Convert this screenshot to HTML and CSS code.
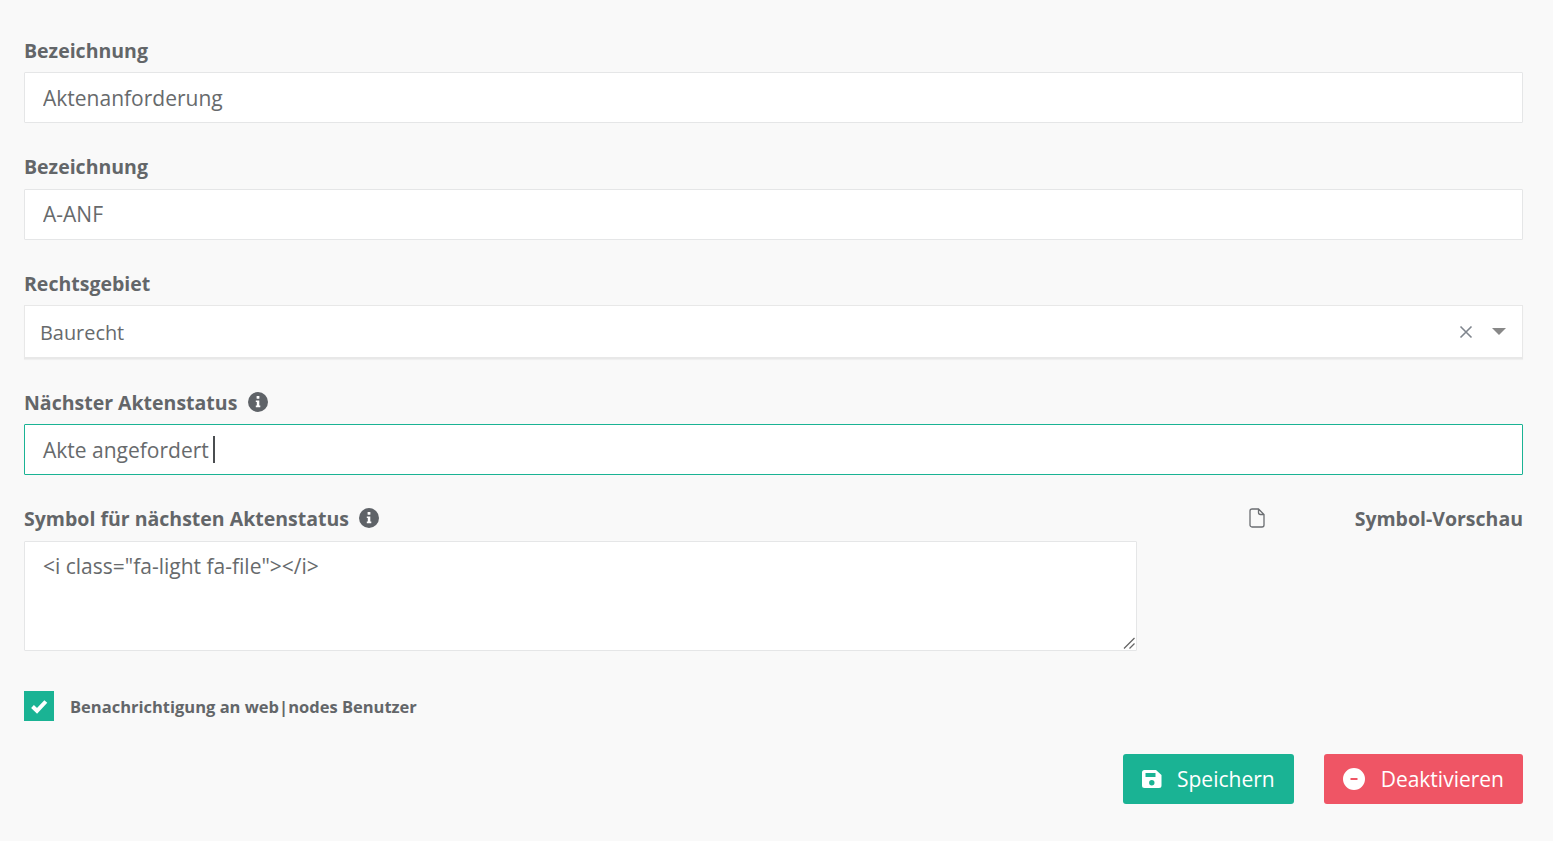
FILE: index.html
```html
<!DOCTYPE html>
<html lang="de">
<head>
<meta charset="utf-8">
<title>Aktenstatus</title>
<link rel="stylesheet" href="styles.css">
</head>
<body>
<form class="form">
  <div class="group">
    <label class="label">Bezeichnung</label>
    <input class="control" type="text" value="Aktenanforderung">
  </div>
  <div class="group group-tight">
    <label class="label label-high">Bezeichnung</label>
    <input class="control control-up" type="text" value="A-ANF">
  </div>
  <div class="group group-select">
    <label class="label">Rechtsgebiet</label>
    <div class="select">
      <span class="select-value">Baurecht</span>
      <svg class="select-clear" width="14" height="14" viewBox="0 0 14 14"><path d="M1.500 1.500l11 11M12.500 1.500l-11 11" stroke="#7f858d" stroke-width="1.600" fill="none"/></svg>
      <span class="select-arrow"></span>
    </div>
  </div>
  <div class="group">
    <label class="label">Nächster Aktenstatus
      <svg class="info info-shift" width="20" height="20" viewBox="0 0 20 20"><circle cx="10" cy="10" r="10" fill="#5f6368"/><rect x="8.600" y="4" width="2.800" height="2.800" rx=".6" fill="#fff"/><path d="M7.800 8.400h3.500v5.200h1v1.700H7.800v-1.700h1v-3.500h-1z" fill="#fff"/></svg>
    </label>
    <div class="control control-focus"><span>Akte angefordert</span><span class="caret"></span></div>
  </div>
  <div class="symbol-row">
    <div class="symbol-main">
      <label class="label label-high">Symbol für nächsten Aktenstatus
        <svg class="info" width="20" height="20" viewBox="0 0 20 20"><circle cx="10" cy="10" r="10" fill="#5f6368"/><rect x="8.600" y="4" width="2.800" height="2.800" rx=".6" fill="#fff"/><path d="M7.800 8.400h3.500v5.200h1v1.700H7.800v-1.700h1v-3.500h-1z" fill="#fff"/></svg>
      </label>
      <div class="area-wrap">
        <textarea class="control area">&lt;i class="fa-light fa-file"&gt;&lt;/i&gt;</textarea>
        <svg class="grip" width="12" height="12" viewBox="0 0 12 12"><path d="M1 11.500L11.500 1M6.500 11.500L11.500 6.500" stroke="#666" stroke-width="1.300" fill="none"/></svg>
      </div>
    </div>
    <div class="symbol-preview">
      <svg class="file-icon" width="16" height="20" viewBox="0 0 16 20"><path d="M3 1h6.500L15 6.500V17a2 2 0 0 1-2 2H3a2 2 0 0 1-2-2V3a2 2 0 0 1 2-2zM9.500 1v3.500a2 2 0 0 0 2 2H15" fill="none" stroke="#6b6e72" stroke-width="1.300"/></svg>
      <span class="label label-high">Symbol-Vorschau</span>
    </div>
  </div>
  <label class="check">
    <span class="check-box"><svg width="18" height="15" viewBox="0 0 18 15"><path d="M2.500 7.500l4.500 4.300L15.800 2.500" fill="none" stroke="#fff" stroke-width="4"/></svg></span>
    <span class="check-text">Benachrichtigung an web|nodes Benutzer</span>
  </label>
  <div class="actions">
    <button type="button" class="btn btn-save">
      <svg width="20" height="20" viewBox="0 0 20 20"><path fill="#fff" fill-rule="evenodd" d="M2.500 1H14l5.500 5v10.500a2.500 2.500 0 0 1-2.500 2.500H2.500A2.500 2.500 0 0 1 0 16.500v-13A2.500 2.500 0 0 1 2.500 1zM3.500 4v4h10V4zM9.800 11a2.700 2.700 0 1 0 0 5.400a2.700 2.700 0 0 0 0-5.400z"/></svg>
      Speichern
    </button>
    <button type="button" class="btn btn-off">
      <svg width="22" height="22" viewBox="0 0 22 22"><path fill="#fff" fill-rule="evenodd" d="M11 0a11 11 0 1 1 0 22a11 11 0 0 1 0-22zM7.500 10v2h7v-2z"/></svg>
      Deaktivieren
    </button>
  </div>
</form>
</body>
</html>
```
FILE: styles.css
```css
* { box-sizing: border-box; }
html, body { margin: 0; height: 100%; }
body {
  background: #f9f9f9;
  color: #676a6c;
  font-family: "Open Sans", sans-serif;
  overflow: hidden;
}
.form { padding: 39px 30px 0 24px; }
.group { margin-bottom: 33px; }
.group-tight { margin-bottom: 32px; }
.group-select { margin-bottom: 32px; }
.label {
  display: flex;
  align-items: center;
  gap: 10px;
  height: 33px;
  padding: 0 0 11px 0;
  font-size: 19.5px;
  font-weight: 700;
  color: #636669;
  white-space: nowrap;
}
.label-high { padding-bottom: 13px; }
.info-shift { margin-left: 1px; }
.control {
  display: block;
  width: 100%;
  height: 51px;
  padding: 0 18px;
  background: #fff;
  border: 1px solid #e5e6e7;
  border-radius: 1px;
  font-family: inherit;
  font-size: 21px;
  color: #676a6c;
  outline: none;
}
.control-up { padding-bottom: 2px; }
.control-focus {
  display: flex;
  align-items: center;
  border-color: #1ab394;
}
.caret {
  width: 2px;
  height: 27px;
  margin-left: 4px;
  background: #4a4d50;
}
.select {
  display: flex;
  align-items: center;
  height: 54px;
  padding: 2px 16px 0 15px;
  background: #fff;
  border: 1px solid #e8e8e8;
  border-bottom-width: 2px;
  box-shadow: 0 1px 1px #efefef;
  font-size: 19.9px;
}
.select-value { flex: 1; }
.select-clear { margin: -2px 19px 0 0; }
.select-arrow {
  width: 0;
  height: 0;
  margin-top: -2px;
  border-left: 7px solid transparent;
  border-right: 7px solid transparent;
  border-top: 7px solid #888;
}
.symbol-row { display: flex; }
.symbol-main { width: 1113px; flex: none; }
.area-wrap { position: relative; }
.area {
  height: 110px;
  padding: 9px 18px;
  resize: none;
  line-height: 30px;
}
.grip {
  position: absolute;
  right: 2px;
  bottom: 2px;
  pointer-events: none;
}
.symbol-preview {
  display: flex;
  flex: 1;
  align-items: flex-start;
  justify-content: space-between;
}
.file-icon { flex: none; margin: 0 0 0 112px; }
.check {
  display: flex;
  align-items: center;
  gap: 16px;
  margin-top: 40px;
}
.check-box {
  display: flex;
  align-items: center;
  justify-content: center;
  width: 30px;
  height: 30px;
  background: #1ab394;
}
.check-text { font-size: 16.5px; font-weight: 700; color: #636669; }
.actions {
  display: flex;
  justify-content: flex-end;
  gap: 30px;
  margin-top: 33px;
}
.btn {
  display: flex;
  align-items: center;
  gap: 15px;
  height: 50px;
  padding: 0 19px;
  border: 0;
  border-radius: 3px;
  color: #fff;
  font-family: inherit;
  font-size: 21px;
}
.btn-save { background: #1ab394; }
.btn-off { background: #ef5565; gap: 16px; }
```
